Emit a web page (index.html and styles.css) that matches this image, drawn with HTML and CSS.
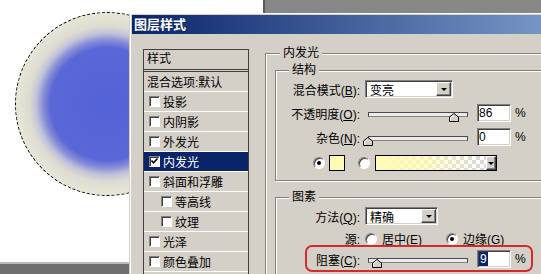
FILE: index.html
```html
<!DOCTYPE html>
<html lang="zh-CN">
<head>
    <meta charset="UTF-8">
    <meta name="viewport" content="width=device-width, initial-scale=1.0">
    <title>图层样式</title>
    <link rel="stylesheet" href="styles.css">
</head>
<body>
    <div class="workspace">
        <div class="canvas-window">
            <div class="canvas">
                <div class="selection"></div>
            </div>
            <div class="canvas-bar"></div>
        </div>
        <div class="palette-area"></div>
    </div>

    <div class="dialog">
        <div class="titlebar">图层样式</div>
        <div class="dialog-body">
            <ul class="style-list">
                <li class="list-head">样式</li>
                <li class="list-item">混合选项:默认</li>
                <li class="list-item"><span class="check"></span>投影</li>
                <li class="list-item"><span class="check"></span>内阴影</li>
                <li class="list-item"><span class="check"></span>外发光</li>
                <li class="list-item selected">
                    <span class="check">
                        <svg width="9" height="9" viewBox="0 0 9 9"><path d="M1.5 3.5 L3.5 5.8 L7.5 1.5" fill="none" stroke="#000" stroke-width="1.6"/></svg>
                    </span>内发光
                </li>
                <li class="list-item"><span class="check"></span>斜面和浮雕</li>
                <li class="list-item sub"><span class="check"></span>等高线</li>
                <li class="list-item sub"><span class="check"></span>纹理</li>
                <li class="list-item"><span class="check"></span>光泽</li>
                <li class="list-item"><span class="check"></span>颜色叠加</li>
            </ul>

            <div class="settings">
                <fieldset class="group outer">
                    <legend>内发光</legend>

                    <fieldset class="group inner structure">
                        <legend>结构</legend>
                        <div class="row">
                            <span class="label">混合模式(<u>B</u>):</span>
                            <div class="select blend"><span class="select-text">变亮</span><span class="select-btn"></span></div>
                        </div>
                        <div class="row">
                            <span class="label">不透明度(<u>O</u>):</span>
                            <div class="slider">
                                <div class="track"></div>
                                <svg class="thumb" style="left: 86%" width="10" height="9" viewBox="0 0 10 9"><path d="M0.5 8.5 V4 L5 0.5 L9.5 4 V8.5 Z" fill="#d4d0c8" stroke="#000"/><path d="M1.5 7.5 V4.5 L5 1.8" fill="none" stroke="#fff"/></svg>
                            </div>
                            <div class="num">86</div><span class="pct">%</span>
                        </div>
                        <div class="row">
                            <span class="label">杂色(<u>N</u>):</span>
                            <div class="slider">
                                <div class="track"></div>
                                <svg class="thumb" style="left: 0%" width="10" height="9" viewBox="0 0 10 9"><path d="M0.5 8.5 V4 L5 0.5 L9.5 4 V8.5 Z" fill="#d4d0c8" stroke="#000"/><path d="M1.5 7.5 V4.5 L5 1.8" fill="none" stroke="#fff"/></svg>
                            </div>
                            <div class="num">0</div><span class="pct">%</span>
                        </div>
                        <div class="row color-row">
                            <span class="radio on"></span>
                            <span class="swatch"></span>
                            <span class="radio"></span>
                            <div class="gradient-pick"><span class="select-btn"></span></div>
                        </div>
                    </fieldset>

                    <fieldset class="group inner elements">
                        <legend>图素</legend>
                        <div class="row">
                            <span class="label">方法(<u>Q</u>):</span>
                            <div class="select method"><span class="select-text">精确</span><span class="select-btn"></span></div>
                        </div>
                        <div class="row source-row">
                            <span class="label">源:</span>
                            <span class="radio"></span><span class="option">居中(<u>E</u>)</span>
                            <span class="radio on edge"></span><span class="option">边缘(<u>G</u>)</span>
                        </div>
                        <div class="row choke-row">
                            <span class="label">阻塞(<u>C</u>):</span>
                            <div class="slider">
                                <div class="track"></div>
                                <svg class="thumb" style="left: 9%" width="10" height="9" viewBox="0 0 10 9"><path d="M0.5 8.5 V4 L5 0.5 L9.5 4 V8.5 Z" fill="#d4d0c8" stroke="#000"/><path d="M1.5 7.5 V4.5 L5 1.8" fill="none" stroke="#fff"/></svg>
                            </div>
                            <div class="num"><span class="sel">9</span></div><span class="pct">%</span>
                        </div>
                    </fieldset>
                </fieldset>
            </div>
        </div>
    </div>

    <div class="callout"></div>
</body>
</html>
```

FILE: styles.css
```css
* {
    box-sizing: border-box;
}
body {
    margin: 0;
    width: 541px;
    height: 274px;
    overflow: hidden;
    position: relative;
    font-family: "Liberation Sans", "Noto Sans CJK SC", sans-serif;
    font-size: 12px;
    color: #000;
    background: #fff;
}

/* workspace behind the dialog */
.workspace {
    display: flex;
    height: 100%;
}
.canvas-window {
    width: 263px;
    display: flex;
    flex-direction: column;
}
.canvas {
    flex: 1;
    position: relative;
    background: #fff;
}
.selection {
    position: absolute;
    left: 15px;
    top: 12px;
    width: 184px;
    height: 184px;
    border-radius: 50%;
    border: 1px dashed #000;
    background: radial-gradient(circle closest-side,
        #5462d8 0%, #5a67d6 62%, #868cd8 70%, #c1c3da 78%, #dedcd1 86%, #e8e6d8 100%);
}
.canvas-bar {
    height: 12px;
    background: #6e6e6e;
    border-top: 2px solid #bcbcbc;
}
.palette-area {
    flex: 1;
    background: #878787;
    border-left: 2px solid #5a5a5a;
}

/* dialog window */
.dialog {
    position: absolute;
    left: 129px;
    top: 13px;
    width: 602px;
    height: 300px;
    padding: 2px 0 0 2px;
    background: #d4d0c8;
    border-left: 1px solid #d4d0c8;
    box-shadow: inset 1px 1px 0 #fff;
}
.titlebar {
    height: 19px;
    padding-left: 2px;
    line-height: 19px;
    font-size: 13px;
    font-weight: bold;
    color: #fff;
    background: linear-gradient(to right, #0a246a, #a6caf0);
}
.dialog-body {
    display: flex;
    align-items: flex-start;
    padding: 12px 0 0 11px;
}

/* style list */
.style-list {
    list-style: none;
    margin: 3px 0 0;
    padding: 0;
    width: 106px;
    height: 260px;
    flex: none;
    border: 1px solid #404040;
}
.list-head {
    height: 22px;
    line-height: 19px;
    padding-left: 3px;
    border-bottom: 3px double #404040;
}
.list-item {
    display: flex;
    align-items: center;
    height: 20px;
    padding-left: 5px;
    border-bottom: 1px solid #fff;
    white-space: nowrap;
}
.list-item:nth-child(2) {
    padding-left: 3px;
}
.list-item.sub {
    padding-left: 17px;
}
.list-item.selected {
    background: #0a246a;
    color: #fff;
}
.check {
    width: 11px;
    height: 11px;
    flex: none;
    margin-right: 3px;
    display: flex;
    align-items: center;
    justify-content: center;
    background: #fff;
    border: 1px solid;
    border-color: #808080 #fff #fff #808080;
    box-shadow: inset 1px 1px 0 #404040;
}

/* settings */
.settings {
    margin-left: 16px;
}
.group {
    margin: 0;
    padding: 0;
    min-width: 0;
    border: 1px solid #808080;
    box-shadow: inset 1px 1px 0 #fff, 1px 1px 0 #fff;
}
.group legend {
    padding: 0 3px;
    margin-left: 14px;
    line-height: 14px;
    background: #d4d0c8;
}
.outer {
    width: 320px;
    height: 260px;
}
.inner {
    width: 300px;
    margin-left: 9px;
}
.inner legend {
    margin-left: 13px;
}
.structure {
    margin-top: 3px;
    padding-bottom: 5px;
}
.elements {
    margin-top: 9px;
    height: 100px;
}

.row {
    display: flex;
    align-items: center;
    height: 24px;
    white-space: nowrap;
}
.label {
    width: 84px;
    margin-right: 5px;
    text-align: right;
    flex: none;
}

.select {
    height: 18px;
    display: flex;
    align-items: center;
    padding: 0 1px 0 4px;
    background: #fff;
    border: 1px solid;
    border-color: #808080 #fff #fff #808080;
    box-shadow: inset 1px 1px 0 #404040, inset -1px -1px 0 #d4d0c8;
}
.select.blend {
    width: 88px;
}
.select.method {
    width: 73px;
}
.select-text {
    flex: 1;
}
.select-btn {
    width: 15px;
    height: 14px;
    flex: none;
    display: flex;
    align-items: center;
    justify-content: center;
    background: #d4d0c8;
    border: 1px solid;
    border-color: #fff #404040 #404040 #fff;
    box-shadow: inset -1px -1px 0 #808080;
}
.select-btn::after {
    content: "";
    border-left: 3px solid transparent;
    border-right: 3px solid transparent;
    border-top: 3px solid #000;
    margin-top: 1px;
}

.slider {
    position: relative;
    width: 100px;
    height: 18px;
    margin-left: 3px;
    flex: none;
}
.track {
    margin-top: 8px;
    height: 5px;
    background: #ececec;
    border: 1px solid #4a4a4a;
    border-bottom-color: #808080;
}
.thumb {
    position: absolute;
    top: 9px;
    margin-left: -5px;
}
.num {
    width: 34px;
    height: 18px;
    margin-left: 9px;
    padding-left: 1px;
    line-height: 16px;
    background: #fff;
    border: 1px solid;
    border-color: #808080 #fff #fff #808080;
    box-shadow: inset 1px 1px 0 #404040, inset -1px -1px 0 #d4d0c8;
}
.num .sel {
    display: inline-block;
    padding: 0 1px;
    background: #0a246a;
    color: #fff;
    line-height: 14px;
}
.pct {
    margin-left: 4px;
}

.radio {
    width: 12px;
    height: 12px;
    flex: none;
    display: flex;
    align-items: center;
    justify-content: center;
    border-radius: 50%;
    background: #fff;
    border: 1px solid;
    border-color: #808080 #fff #fff #808080;
    box-shadow: inset 1px 1px 0 #404040;
}
.radio.on::after {
    content: "";
    width: 4px;
    height: 4px;
    border-radius: 50%;
    background: #000;
}

.color-row {
    margin-top: 2px;
    padding-left: 37px;
}
.swatch {
    width: 16px;
    height: 16px;
    margin-left: 4px;
    background: #fffbb4;
    border: 1px solid #000;
}
.color-row .radio + .swatch + .radio {
    margin-left: 13px;
}
.gradient-pick {
    width: 122px;
    height: 16px;
    margin-left: 5px;
    display: flex;
    justify-content: flex-end;
    border: 1px solid #000;
    background:
        linear-gradient(to right, #fffbb4 0%, rgba(255, 251, 180, 0.75) 40%, rgba(255, 251, 180, 0) 85%),
        repeating-conic-gradient(#d9d9d9 0 25%, #fff 0 50%) 0 0 / 8px 8px;
}
.gradient-pick .select-btn {
    width: 10px;
}

.source-row {
    height: 21px;
}
.option {
    margin-left: 5px;
}
.radio.edge {
    margin-left: 24px;
}
.choke-row {
    height: 20px;
}

/* red annotation around the choke row */
.callout {
    position: absolute;
    left: 305px;
    top: 245px;
    width: 228px;
    height: 27px;
    border: 2px solid #d42a2a;
    border-radius: 7px;
}
```
